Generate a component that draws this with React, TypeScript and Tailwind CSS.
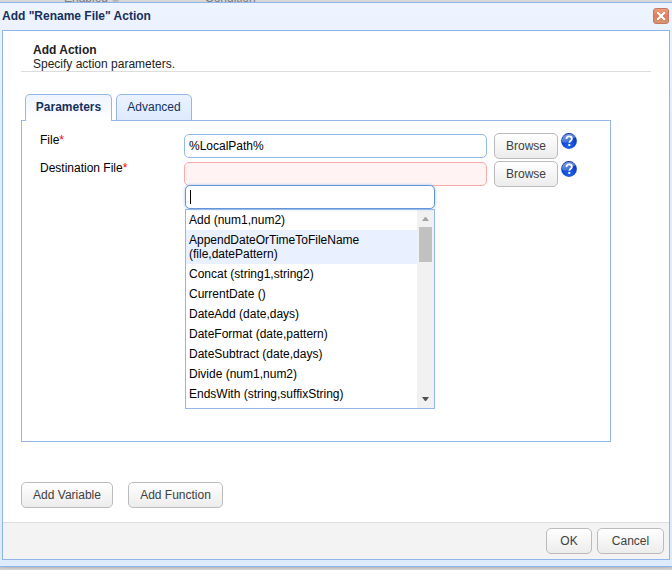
import React, { useState } from 'react';

const FUNCTIONS = [
  'Add (num1,num2)',
  'AppendDateOrTimeToFileName (file,datePattern)',
  'Concat (string1,string2)',
  'CurrentDate ()',
  'DateAdd (date,days)',
  'DateFormat (date,pattern)',
  'DateSubtract (date,days)',
  'Divide (num1,num2)',
  'EndsWith (string,suffixString)',
];

interface ButtonProps {
  children: React.ReactNode;
  className: string;
}

const Button: React.FC<ButtonProps> = ({ children, className }) => (
  <button
    type="button"
    className={`h-[26px] shrink-0 rounded-[5px] border border-[#bbbbbb] bg-linear-to-b from-white to-[#ececec] text-center text-[#404040] ${className}`}
  >
    {children}
  </button>
);

const HelpIcon: React.FC = () => (
  <svg viewBox="0 0 16 16" className="block size-4">
    <defs>
      <radialGradient id="help-ball" cx="0.5" cy="0.8" r="0.8">
        <stop offset="0" stopColor="#1e63ee" />
        <stop offset="0.5" stopColor="#1149d2" />
        <stop offset="1" stopColor="#0b2f9e" />
      </radialGradient>
      <linearGradient id="help-shine" x1="0" y1="0" x2="0.6" y2="1">
        <stop offset="0" stopColor="#c3d8fa" />
        <stop offset="1" stopColor="#3b6fdb" />
      </linearGradient>
    </defs>
    <circle cx="8" cy="8" r="7.9" fill="url(#help-ball)" />
    <path d="M1 8.500C0.700 4 4 1 8 1s6 1.500 6.600 4C11.500 4.500 9 6 7.500 8.200 5.800 10.300 3.500 10 1 8.500Z" fill="url(#help-shine)" opacity="0.7" />
    <path d="M5.500 5.900C5.500 4.200 6.600 3.300 8.200 3.300s2.700.9 2.700 2.400c0 2-2.600 2-2.600 4.100" fill="none" stroke="#fff" strokeWidth="1.800" />
    <rect x="7.300" y="10.900" width="2" height="2.100" rx="0.500" fill="#fff" />
  </svg>
);

const CloseIcon: React.FC = () => (
  <svg viewBox="0 0 16 16" className="block size-4">
    <defs>
      <linearGradient id="close-face" x1="0" y1="0" x2="0" y2="1">
        <stop offset="0" stopColor="#f2a07c" />
        <stop offset="0.5" stopColor="#e47a5c" />
        <stop offset="1" stopColor="#d29a72" />
      </linearGradient>
    </defs>
    <rect x="0.500" y="0.500" width="15" height="15" rx="2.500" fill="url(#close-face)" stroke="#c47868" />
    <path d="M4 4h2v1h1v1h2V5h1V4h2v2h-1v1h-1v2h1v1h1v2h-2v-1H9v-1H7v1H6v1H4v-2h1V9h1V7H5V6H4Z" fill="#fff" />
  </svg>
);

const FunctionPicker: React.FC = () => {
  const [query, setQuery] = useState('');
  const [active, setActive] = useState(1);

  return (
    <div className="absolute top-[23px] left-px z-10 w-[250px]">
      <div className="relative">
        <input
          type="text"
          aria-label="Function"
          value={query}
          onChange={(e) => setQuery(e.target.value)}
          className="block h-6 w-full rounded-[5px] border border-[#6595d8] bg-white px-1 caret-transparent shadow-[0_0_3px_#9cc0f0] outline-none"
        />
        {query === '' && <span className="pointer-events-none absolute top-[5px] left-[5px] h-[14px] w-px bg-black" />}
      </div>
      <div className="flex h-[200px] border border-[#96b8e9] bg-white">
        <ul role="listbox" aria-label="Functions" className="min-w-0 flex-1 overflow-hidden">
          {FUNCTIONS.map((name, i) => (
            <li
              key={name}
              role="option"
              aria-selected={i === active}
              onMouseEnter={() => setActive(i)}
              className={`px-[3px] py-[3px] ${i === active ? 'bg-[#e9f0ff]' : ''}`}
            >
              {name}
            </li>
          ))}
        </ul>
        <div className="flex w-[17px] flex-col items-center bg-[#f1f1f1]">
          <svg viewBox="0 0 17 17" className="size-[17px]">
            <path d="M5 11h7L9 7H8Z" fill="#a3a3a3" />
          </svg>
          <div className="h-[35px] w-[13px] bg-[#c1c1c1]" />
          <svg viewBox="0 0 17 17" className="mt-auto size-[17px]">
            <path d="M5 6h7L9 10H8Z" fill="#505050" />
          </svg>
        </div>
      </div>
    </div>
  );
};

interface FieldRowProps {
  id: string;
  label: string;
  value: string;
  invalid?: boolean;
  children?: React.ReactNode;
}

const FieldRow: React.FC<FieldRowProps> = ({ id, label, value, invalid, children }) => {
  const [text, setText] = useState(value);

  return (
    <div className="flex h-7 items-start">
      <label htmlFor={id} className="w-36 shrink-0">
        {label}
        <span className="text-[#ff0000]">*</span>
      </label>
      <div className="relative mt-px min-w-0 flex-1">
        <input
          id={id}
          type="text"
          value={text}
          onChange={(e) => setText(e.target.value)}
          className={`block h-6 w-full rounded-[5px] border px-1 outline-none ${
            invalid ? 'border-[#ffa8a8] bg-[#fff3f3]' : 'border-[#96b8e9] bg-white'
          }`}
        />
        {children}
      </div>
      <Button className="ml-[7px] w-16">Browse</Button>
      <button type="button" aria-label="Help" className="ml-[3px] shrink-0">
        <HelpIcon />
      </button>
    </div>
  );
};

export default function App() {
  return (
    <div className="flex min-h-screen flex-col bg-[#dcdcdc] font-['Liberation_Sans',Arial,sans-serif] text-xs leading-[14px] text-black">
      <div className="flex h-[2px] items-end overflow-hidden pl-16 text-[#777777]">
        <span className="w-[141px] leading-[8px]">
          Enabled <span className="text-[#b8b8b8]">◆</span>
        </span>
        <span className="leading-[8px]">Condition</span>
      </div>

      <div
        role="dialog"
        aria-labelledby="dialog-title"
        className="mb-[3px] flex flex-1 flex-col border-y border-[#8fb5ec] bg-linear-to-b from-[#eef4ff] via-[#e3edfd] via-20% to-[#deebfd] px-[2px] pb-[6px] shadow-[0_1px_3px_#aaaaaa]"
      >
        <header className="flex h-[27px] shrink-0 items-center justify-between pr-px pb-px">
          <h1 id="dialog-title" className="font-bold text-[#15305f]">Add "Rename File" Action</h1>
          <button type="button" aria-label="Close">
            <CloseIcon />
          </button>
        </header>

        <div className="flex flex-1 flex-col border border-[#8fb5ec] bg-white">
          <main className="flex-1 px-[18px]">
            <div className="border-b border-[#dddddd] pt-3 pl-3 text-[#222222]">
              <h2 className="font-bold">Add Action</h2>
              <p>Specify action parameters.</p>
            </div>

            <div className="mr-10 pt-[22px]">
              <div role="tablist" className="relative z-10 -mb-px flex h-[27px] gap-1 pl-1">
                <button
                  type="button"
                  role="tab"
                  aria-selected="true"
                  className="w-[87px] rounded-t-[5px] border border-b-0 border-[#96b8e9] bg-linear-to-b from-[#eef4ff] to-white pb-[2px] font-bold text-[#15305f]"
                >
                  Parameters
                </button>
                <button
                  type="button"
                  role="tab"
                  aria-selected="false"
                  className="w-[76px] rounded-t-[5px] border border-[#96b8e9] bg-linear-to-b from-[#ebf2ff] to-[#deebfd] pb-px text-[#15305f]"
                >
                  Advanced
                </button>
              </div>
              <div role="tabpanel" className="h-[322px] border border-[#96b8e9] pt-3 pr-[33px] pl-[18px]">
                <FieldRow id="file" label="File" value="%LocalPath%" />
                <FieldRow id="destination-file" label="Destination File" value="" invalid>
                  <FunctionPicker />
                </FieldRow>
              </div>
            </div>

            <div className="flex gap-[15px] pt-10 pb-[14px]">
              <Button className="w-[92px]">Add Variable</Button>
              <Button className="w-[95px]">Add Function</Button>
            </div>
          </main>

          <footer className="flex h-[37px] shrink-0 items-center justify-end gap-[5px] border-t border-[#dddddd] bg-[#f3f3f3] pr-[5px]">
            <Button className="w-[46px]">OK</Button>
            <Button className="w-[67px]">Cancel</Button>
          </footer>
        </div>
      </div>
    </div>
  );
}
